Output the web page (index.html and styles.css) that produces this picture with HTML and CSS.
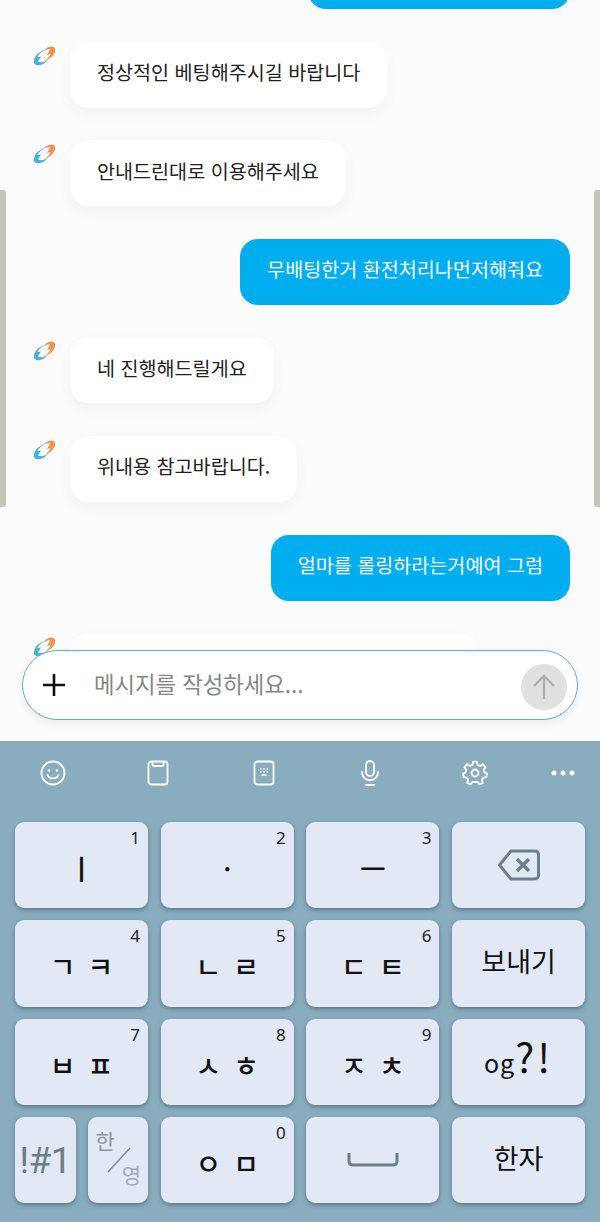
FILE: index.html
```html
<!DOCTYPE html>
<html lang="ko">

<head>
    <meta charset="utf-8">
    <title>Chat</title>
    <link rel="stylesheet" href="styles.css">
</head>

<body>
    <svg width="0" height="0" class="defs">
        <symbol id="logo" viewBox="0 0 24 22">
            <path d="M2 17C1 10 8 4 18 2.500C12 4 7 7 5.500 11L9 10.500L6 15.500C9 17 13 16 16 13.500C13 18 5 22 2 17Z" fill="#4bb0d8"/>
            <path d="M23 3C24 7 20 12 13 15C16 12 18 10 18.500 8L15 9L18 3.500C16 3 14 3 12 4C16 0.500 22 -1 23 3Z" fill="#f0934e"/>
        </symbol>
    </svg>

    <div class="chat">
        <div class="messages">
            <div class="msg sent"><div class="bubble wide-a"></div></div>
            <div class="msg"><svg class="logo"><use href="#logo"/></svg><div class="bubble">정상적인 베팅해주시길 바랍니다</div></div>
            <div class="msg"><svg class="logo"><use href="#logo"/></svg><div class="bubble">안내드린대로 이용해주세요</div></div>
            <div class="msg sent"><div class="bubble">무배팅한거 환전처리나먼저해줘요</div></div>
            <div class="msg"><svg class="logo"><use href="#logo"/></svg><div class="bubble">네 진행해드릴게요</div></div>
            <div class="msg"><svg class="logo"><use href="#logo"/></svg><div class="bubble">위내용 참고바랍니다.</div></div>
            <div class="msg sent"><div class="bubble">얼마를 롤링하라는거예여 그럼</div></div>
            <div class="msg"><svg class="logo"><use href="#logo"/></svg><div class="bubble wide-b"></div></div>
        </div>

        <div class="scrollbar left"></div>
        <div class="scrollbar right"></div>

        <div class="inputbar">
            <svg class="plus" width="24" height="24" viewBox="0 0 24 24"><path d="M12 1V23M1 12H23" stroke="#111" stroke-width="2.600" fill="none"/></svg>
            <span class="placeholder">메시지를 작성하세요...</span>
            <div class="send">
                <svg width="24" height="26" viewBox="0 0 24 26"><path d="M12 25V2M2 12L12 2L22 12" stroke="#aeaeae" stroke-width="2.400" fill="none"/></svg>
            </div>
        </div>
    </div>

    <div class="keyboard">
        <div class="toolbar">
            <div class="tool">
                <svg width="26" height="26" viewBox="0 0 26 26" fill="none" stroke="#fff" stroke-width="1.800"><circle cx="13" cy="13" r="11.500"/><circle cx="9" cy="10.500" r="1.200" fill="#fff" stroke="none"/><circle cx="17" cy="10.500" r="1.200" fill="#fff" stroke="none"/><path d="M7.500 15C9 19.500 17 19.500 18.500 15" stroke-linecap="round"/></svg>
            </div>
            <div class="tool">
                <svg width="24" height="26" viewBox="0 0 24 26" fill="none" stroke="#fff" stroke-width="1.800"><rect x="2.500" y="1.500" width="19" height="23" rx="3"/><path d="M6.500 1.500V4.500C6.500 5.500 7 6 8 6H16C17 6 17.500 5.500 17.500 4.500V1.500"/></svg>
            </div>
            <div class="tool">
                <svg width="24" height="26" viewBox="0 0 24 26" fill="none" stroke="#fff" stroke-width="1.800"><rect x="2.500" y="1.500" width="19" height="23" rx="3"/><path d="M8 9H9.500M11.300 9H12.800M14.600 9H16M8 12H9.500M11.300 12H12.800M14.600 12H16M9.500 15H14.600" stroke-width="1.500"/></svg>
            </div>
            <div class="tool">
                <svg width="22" height="26" viewBox="0 0 22 26" fill="none" stroke="#fff" stroke-width="1.800" stroke-linecap="round"><rect x="7" y="1" width="8" height="15" rx="4"/><path d="M3 12C3 23 19 23 19 12M7 25H15"/></svg>
            </div>
            <div class="tool">
                <svg width="26" height="26" viewBox="0 0 24 24" fill="none" stroke="#fff" stroke-width="1.700" stroke-linejoin="round"><circle cx="12" cy="12" r="3.200"/><path d="M10.300 1.500H13.700L14.300 4.500L16.700 5.500L19.300 3.800L21.700 6.700L20 9.300L20.700 11.500L23 12.500L22.500 15.800L19.700 16.200L18.300 18.300L19.300 21L16.300 22.500L14.300 20.300H9.700L7.700 22.500L4.700 21L5.700 18.300L4.300 16.200L1.500 15.800L1 12.500L3.300 11.500L4 9.300L2.300 6.700L4.700 3.800L7.300 5.500L9.700 4.500Z"/></svg>
            </div>
            <div class="tool last">
                <svg width="24" height="6" viewBox="0 0 24 6" fill="#fff"><circle cx="3" cy="3" r="2.500"/><circle cx="12" cy="3" r="2.500"/><circle cx="21" cy="3" r="2.500"/></svg>
            </div>
        </div>

        <div class="keys">
            <div class="key"><span class="num">1</span><span class="pair">ㅣ</span></div>
            <div class="key"><span class="num">2</span><span class="pair">ㆍ</span></div>
            <div class="key"><span class="num">3</span><span class="pair">ㅡ</span></div>
            <div class="key">
                <svg width="44" height="34" viewBox="0 0 44 34" fill="none" stroke="#6d7f8c" stroke-width="3" stroke-linejoin="round"><path d="M14 3H38C40 3 41.500 4.500 41.500 6.500V27.500C41.500 29.500 40 31 38 31H14L2.500 17Z"/><path d="M20 11L32 23M32 11L20 23" stroke-width="3.400"/></svg>
            </div>

            <div class="key"><span class="num">4</span><span class="pair"><span>ㄱ</span><span>ㅋ</span></span></div>
            <div class="key"><span class="num">5</span><span class="pair"><span>ㄴ</span><span>ㄹ</span></span></div>
            <div class="key"><span class="num">6</span><span class="pair"><span>ㄷ</span><span>ㅌ</span></span></div>
            <div class="key word">보내기</div>

            <div class="key"><span class="num">7</span><span class="pair"><span>ㅂ</span><span>ㅍ</span></span></div>
            <div class="key"><span class="num">8</span><span class="pair"><span>ㅅ</span><span>ㅎ</span></span></div>
            <div class="key"><span class="num">9</span><span class="pair"><span>ㅈ</span><span>ㅊ</span></span></div>
            <div class="key punct"><span class="small">og</span><span class="marks">?!</span></div>

            <div class="split">
                <div class="key symbols">!#1</div>
                <div class="key lang">
                    <span class="han">한</span>
                    <svg class="slash" width="24" height="26" viewBox="0 0 24 26"><path d="M1 25L23 1" stroke="#7d8a94" stroke-width="1.500"/></svg>
                    <span class="yeong">영</span>
                </div>
            </div>
            <div class="key"><span class="num">0</span><span class="pair"><span>ㅇ</span><span>ㅁ</span></span></div>
            <div class="key">
                <svg width="52" height="14" viewBox="0 0 52 14" fill="none" stroke="#6d7f8c" stroke-width="3"><path d="M2 0V8C2 10.500 3.500 12 6 12H46C48.500 12 50 10.500 50 8V0"/></svg>
            </div>
            <div class="key word">한자</div>
        </div>
    </div>
</body>

</html>
```

FILE: styles.css
```css
* {
    box-sizing: border-box;
}

body {
    margin: 0;
    width: 600px;
    height: 1222px;
    overflow: hidden;
    font-family: "Noto Sans CJK KR", "Noto Sans", sans-serif;
}

.defs {
    display: block;
    height: 0;
}

/* Chat area */
.chat {
    position: relative;
    height: 741px;
    overflow: hidden;
    background-color: #fbfbfb;
}

.messages {
    display: flex;
    flex-direction: column;
    gap: 32.6px;
    margin-top: -57px;
    padding: 0 30px 0 32px;
}

.msg {
    display: flex;
    align-items: flex-start;
}

.msg.sent {
    justify-content: flex-end;
}

.logo {
    width: 24px;
    height: 22px;
    margin-top: 4px;
    margin-right: 14px;
    flex-shrink: 0;
}

.bubble {
    height: 66px;
    padding: 0 27px 6px;
    display: flex;
    align-items: center;
    border-radius: 18px;
    background-color: #fff;
    color: #222;
    font-size: 19.600px;
    white-space: nowrap;
    box-shadow: 0 6px 14px rgba(0, 0, 0, 0.04);
}

.sent .bubble {
    background-color: #00aeef;
    color: #fff;
    box-shadow: none;
}

.wide-a {
    width: 262px;
}

.wide-b {
    width: 408px;
}

.scrollbar {
    position: absolute;
    top: 190px;
    width: 6px;
    height: 317px;
    background-color: #c3c5b9;
}

.scrollbar.left {
    left: 0;
    border-radius: 0 3px 3px 0;
}

.scrollbar.right {
    right: 0;
    border-radius: 3px 0 0 3px;
}

/* Input bar */
.inputbar {
    position: absolute;
    left: 22px;
    top: 650px;
    width: 556px;
    height: 70px;
    display: flex;
    align-items: center;
    padding: 0 10.500px 0 19px;
    border: 1.500px solid #55aee2;
    border-radius: 35px;
    background-color: #fff;
    box-shadow: 0 4px 10px rgba(0, 0, 0, 0.05);
}

.plus {
    flex-shrink: 0;
}

.placeholder {
    margin-left: 28px;
    margin-bottom: 4px;
    flex: 1;
    color: #868686;
    font-size: 22.300px;
}

.send {
    width: 46px;
    height: 46px;
    margin-top: 4px;
    border-radius: 50%;
    background-color: #e0e0e0;
    display: flex;
    align-items: center;
    justify-content: center;
}

/* Keyboard */
.keyboard {
    height: 481px;
    background-color: #8aacbf;
}

.toolbar {
    height: 81px;
    display: flex;
    align-items: flex-start;
    padding-top: 19px;
}

.tool {
    width: 105.600px;
    height: 26px;
    display: flex;
    align-items: center;
    justify-content: center;
}

.tool.last {
    width: 70px;
}

.keys {
    display: grid;
    grid-template-columns: repeat(4, 133px);
    grid-auto-rows: 86.300px;
    column-gap: 12.700px;
    row-gap: 12px;
    padding-left: 15px;
}

.key {
    position: relative;
    display: flex;
    align-items: center;
    justify-content: center;
    border-radius: 9px;
    background-color: #e3e8f5;
    color: #111;
    box-shadow: 0 2px 4px rgba(50, 80, 100, 0.55);
}

.num {
    position: absolute;
    top: 4px;
    right: 8px;
    font-family: "Noto Sans", sans-serif;
    font-size: 17px;
    color: #222;
}

.pair {
    display: flex;
    gap: 12px;
    padding-top: 6px;
    font-size: 28px;
    font-weight: 500;
}

.word {
    font-size: 27px;
    padding-bottom: 6px;
}

.punct {
    align-items: baseline;
    padding-top: 8px;
}

.punct .small {
    font-size: 25px;
    letter-spacing: 1px;
}

.marks {
    font-size: 40px;
    letter-spacing: 3px;
}

.split {
    display: flex;
    gap: 12px;
}

.split .key {
    width: 60.500px;
}

.symbols {
    font-family: Roboto, sans-serif;
    font-size: 37px;
    letter-spacing: -0.5px;
    color: #6f7d87;
    white-space: nowrap;
}

.lang {
    flex-direction: column;
    justify-content: space-between;
    padding: 8px 7px 14px 8px;
    font-size: 21px;
    color: #a1abb4;
}

.han {
    align-self: flex-start;
    color: #8a96a0;
}

.yeong {
    align-self: flex-end;
}

.slash {
    position: absolute;
    left: 19px;
    top: 30px;
}
```
